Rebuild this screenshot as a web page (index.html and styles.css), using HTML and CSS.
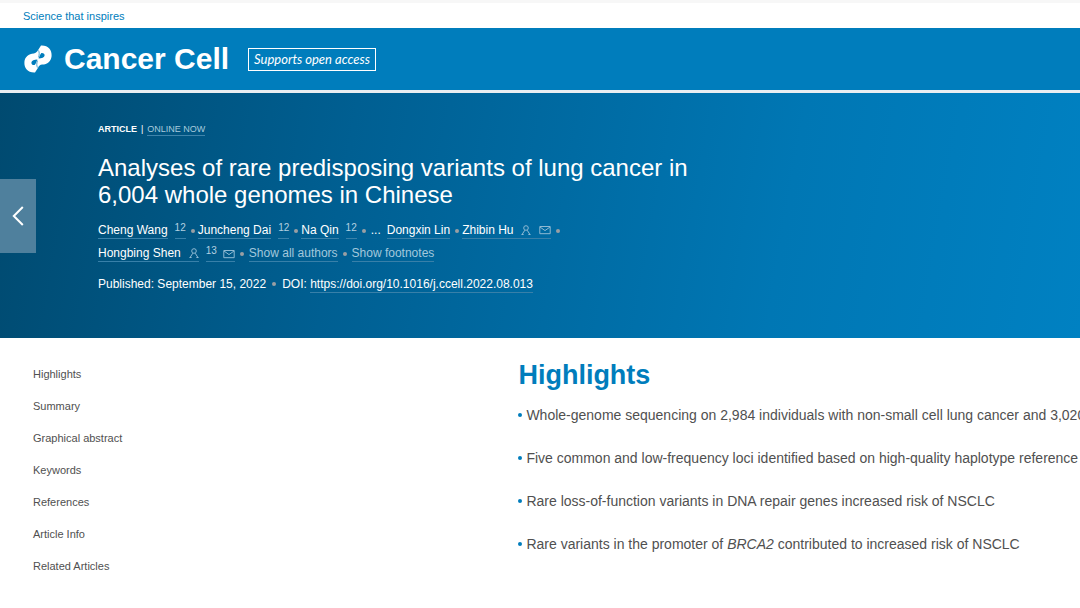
FILE: index.html
```html
<!DOCTYPE html>
<html lang="en">
<head>
<meta charset="utf-8">
<meta name="viewport" content="width=device-width, initial-scale=1">
<title>Cancer Cell</title>
<link rel="stylesheet" href="styles.css">
</head>
<body>
<svg class="sprite" aria-hidden="true">
  <symbol id="person" viewBox="0 0 10 10"><circle cx="5" cy="3" r="2.3"/><path d="M1 9.6 3.8 5.2M9 9.6 6.2 5.2M.6 9.5h2M7.4 9.5h2"/></symbol>
  <symbol id="mail" viewBox="0 0 12 10"><path d="M.8 1.5h10.4v7.2H.8zM1 2l5 3.6L11 2"/></symbol>
</svg>
<div class="topbar"><a href="#">Science that inspires</a></div>
<header class="masthead">
  <a class="brand" href="#">
    <svg class="logo" viewBox="0 0 28 28" aria-hidden="true">
      <path d="M17 .6C24 .2 28 4.6 27.6 11 27.2 16.2 23.4 19.4 18.2 19.6 16 19.8 15 21 14.2 22.4L11 27.4C4 27.8 0 23.4.4 17 .8 11.8 4.6 8.6 9.8 8.4 12 8.2 13 7 13.8 5.6Z"/>
      <path class="hole" d="M17.4 8C19.4 7.8 20.8 8.8 20.6 10.6 20.4 12.6 17.8 13.6 14.6 13.6 15.4 11.6 16 9.4 17.4 8ZM10.6 20C8.6 20.2 7.2 19.2 7.4 17.4 7.6 15.4 10.2 14.4 13.4 14.4 12.6 16.4 12 18.6 10.6 20Z"/>
      <path class="seam" d="M14.6 5.4C15.2 7.2 15.6 9 14.6 12.4M13.4 22.6C12.8 20.8 12.4 19 13.4 15.6"/>
    </svg>
    <span>Cancer Cell</span>
  </a>
  <a class="access" href="#">Supports open access</a>
</header>
<section class="hero">
  <button class="prev" type="button" aria-label="Previous article"><svg viewBox="0 0 12 20" aria-hidden="true"><path d="M10.8 1 1.8 10l9 9"/></svg></button>
  <p class="kind"><strong>ARTICLE</strong><span>|</span><a href="#">ONLINE NOW</a></p>
  <h1>Analyses of rare predisposing variants of lung cancer in 6,004 whole genomes in Chinese</h1>
  <ul class="authors">
    <li><a href="#">Cheng Wang</a><a class="note" href="#">12</a><i class="dot"></i></li>
    <li><a href="#">Juncheng Dai</a><a class="note" href="#">12</a><i class="dot"></i></li>
    <li><a href="#">Na Qin</a><a class="note" href="#">12</a><i class="dot"></i></li>
    <li class="more">...</li>
    <li><a href="#">Dongxin Lin</a><i class="dot"></i></li>
    <li><a href="#">Zhibin Hu<svg class="person"><use href="#person"/></svg><svg class="mail"><use href="#mail"/></svg></a><i class="dot"></i></li>
    <li><a href="#">Hongbing Shen<svg class="person"><use href="#person"/></svg></a><a class="note" href="#">13<svg class="mail"><use href="#mail"/></svg></a><i class="dot"></i></li>
    <li class="action"><button type="button">Show all authors</button><i class="dot"></i></li>
    <li class="action"><button type="button">Show footnotes</button></li>
  </ul>
  <p class="published">Published: September 15, 2022<i class="dot"></i>DOI: <a href="https://doi.org/10.1016/j.ccell.2022.08.013">https://doi.org/10.1016/j.ccell.2022.08.013</a></p>
</section>
<main class="content">
  <nav class="outline">
    <a href="#highlights">Highlights</a>
    <a href="#">Summary</a>
    <a href="#">Graphical abstract</a>
    <a href="#">Keywords</a>
    <a href="#">References</a>
    <a href="#">Article Info</a>
    <a href="#">Related Articles</a>
  </nav>
  <section class="highlights" id="highlights">
    <h2>Highlights</h2>
    <ul>
      <li>Whole-genome sequencing on 2,984 individuals with non-small cell lung cancer and 3,020 controls</li>
      <li>Five common and low-frequency loci identified based on high-quality haplotype reference</li>
      <li>Rare loss-of-function variants in DNA repair genes increased risk of NSCLC</li>
      <li>Rare variants in the promoter of <em>BRCA2</em> contributed to increased risk of NSCLC</li>
    </ul>
  </section>
</main>
</body>
</html>
```
FILE: styles.css
```css
* { box-sizing: border-box; }
body {
  margin: 0;
  background: #fff;
  color: #505050;
  font-family: "Liberation Sans", Arial, sans-serif;
}
a { color: inherit; text-decoration: none; }
ul { list-style: none; margin: 0; padding: 0; }
h1, h2, p { margin: 0; }
.sprite { display: none; }

.topbar {
  padding: 5px 23px 4px;
  border-top: 3px solid #f7f7f7;
  color: #007dbc;
  font-size: 11px;
  line-height: 16px;
}
.topbar a { display: block; }

.masthead {
  display: flex;
  align-items: center;
  gap: 19px;
  padding: 14px 24px;
  background: #007dbc;
  border-bottom: 3px solid #e9eef2;
  color: #fff;
}
.brand {
  display: flex;
  align-items: center;
  gap: 12px;
  font-size: 30px;
  font-weight: bold;
  line-height: 34px;
}
.logo { width: 28px; height: 28px; fill: #fff; }
.logo .hole { fill: #007dbc; }
.logo .seam { fill: none; stroke: #4fa4d0; stroke-width: 1; }
.access {
  padding: 0 5px;
  border: 1px solid #fff;
  font: italic 13px/21px Lato, "Open Sans", sans-serif;
}

.hero {
  position: relative;
  padding: 30px 98px 45px;
  background: linear-gradient(100deg, #004a70 0%, #005f92 32%, #0077b4 72%, #0081c2 100%);
  color: #fff;
}
.prev {
  position: absolute;
  left: 0;
  top: 86px;
  width: 36px;
  height: 74px;
  padding: 0;
  border: 0;
  background: #4f809d;
}
.prev svg {
  display: block;
  width: 12px;
  height: 20px;
  margin: 0 12px;
  fill: none;
  stroke: #fff;
  stroke-width: 2;
}
.kind {
  display: flex;
  gap: 4px;
  font-size: 9px;
  line-height: 12px;
}
.kind a { border-bottom: 1px solid #3f84ab; color: #a9cbdd; }
h1 {
  max-width: 620px;
  margin-top: 18px;
  font-size: 24px;
  font-weight: normal;
  line-height: 27px;
}
.authors {
  display: flex;
  flex-wrap: wrap;
  max-width: 480px;
  margin-top: 15px;
  font-size: 12px;
  row-gap: 7px;
}
.authors li { display: flex; height: 16px; line-height: 15px; }
.authors a, .authors button, .published a { border-bottom: 1px solid #3880a9; }
.authors svg {
  height: 10px;
  margin-left: 8px;
  fill: none;
  stroke: #8fbad3;
  stroke-width: 1;
  vertical-align: -1px;
}
.authors .person { width: 10px; }
.authors .mail { width: 12px; }
.authors .note {
  margin-left: 7px;
  color: #b3d0e0;
  font-size: 10px;
  line-height: 9px;
}
.authors .note svg { margin-left: 6px; vertical-align: -5px; }
.dot {
  display: inline-block;
  width: 4px;
  height: 4px;
  margin: 6px 3px 0 5px;
  border-radius: 50%;
  background: #9a9fa3;
}
.authors .more { padding: 0 6px 0 2px; }
.authors button {
  padding: 0;
  border-width: 0 0 1px;
  background: none;
  color: #a3c8dc;
  font: inherit;
}
.action { margin-left: 2px; }
.published {
  margin-top: 15px;
  font-size: 12px;
  line-height: 15px;
}
.published a { display: inline-block; }
.published .dot { margin: 0 6px 2px; }

.content {
  display: grid;
  grid-template-columns: 48% 1fr;
}
.outline {
  display: flex;
  flex-direction: column;
  gap: 16px;
  padding: 28px 0 0 33px;
  font-size: 11px;
  line-height: 16px;
}
.highlights { min-width: 0; padding-top: 20px; overflow: hidden; }
h2 {
  color: #007dbc;
  font-size: 27px;
  line-height: 34px;
}
.highlights ul {
  display: flex;
  flex-direction: column;
  gap: 23px;
  margin-top: 13px;
  font-size: 14px;
  line-height: 20px;
}
.highlights li { white-space: nowrap; }
.highlights li::before {
  content: "";
  display: inline-block;
  width: 4px;
  height: 4px;
  margin-right: 4px;
  border-radius: 50%;
  background: #007dbc;
  vertical-align: 3px;
}
```
